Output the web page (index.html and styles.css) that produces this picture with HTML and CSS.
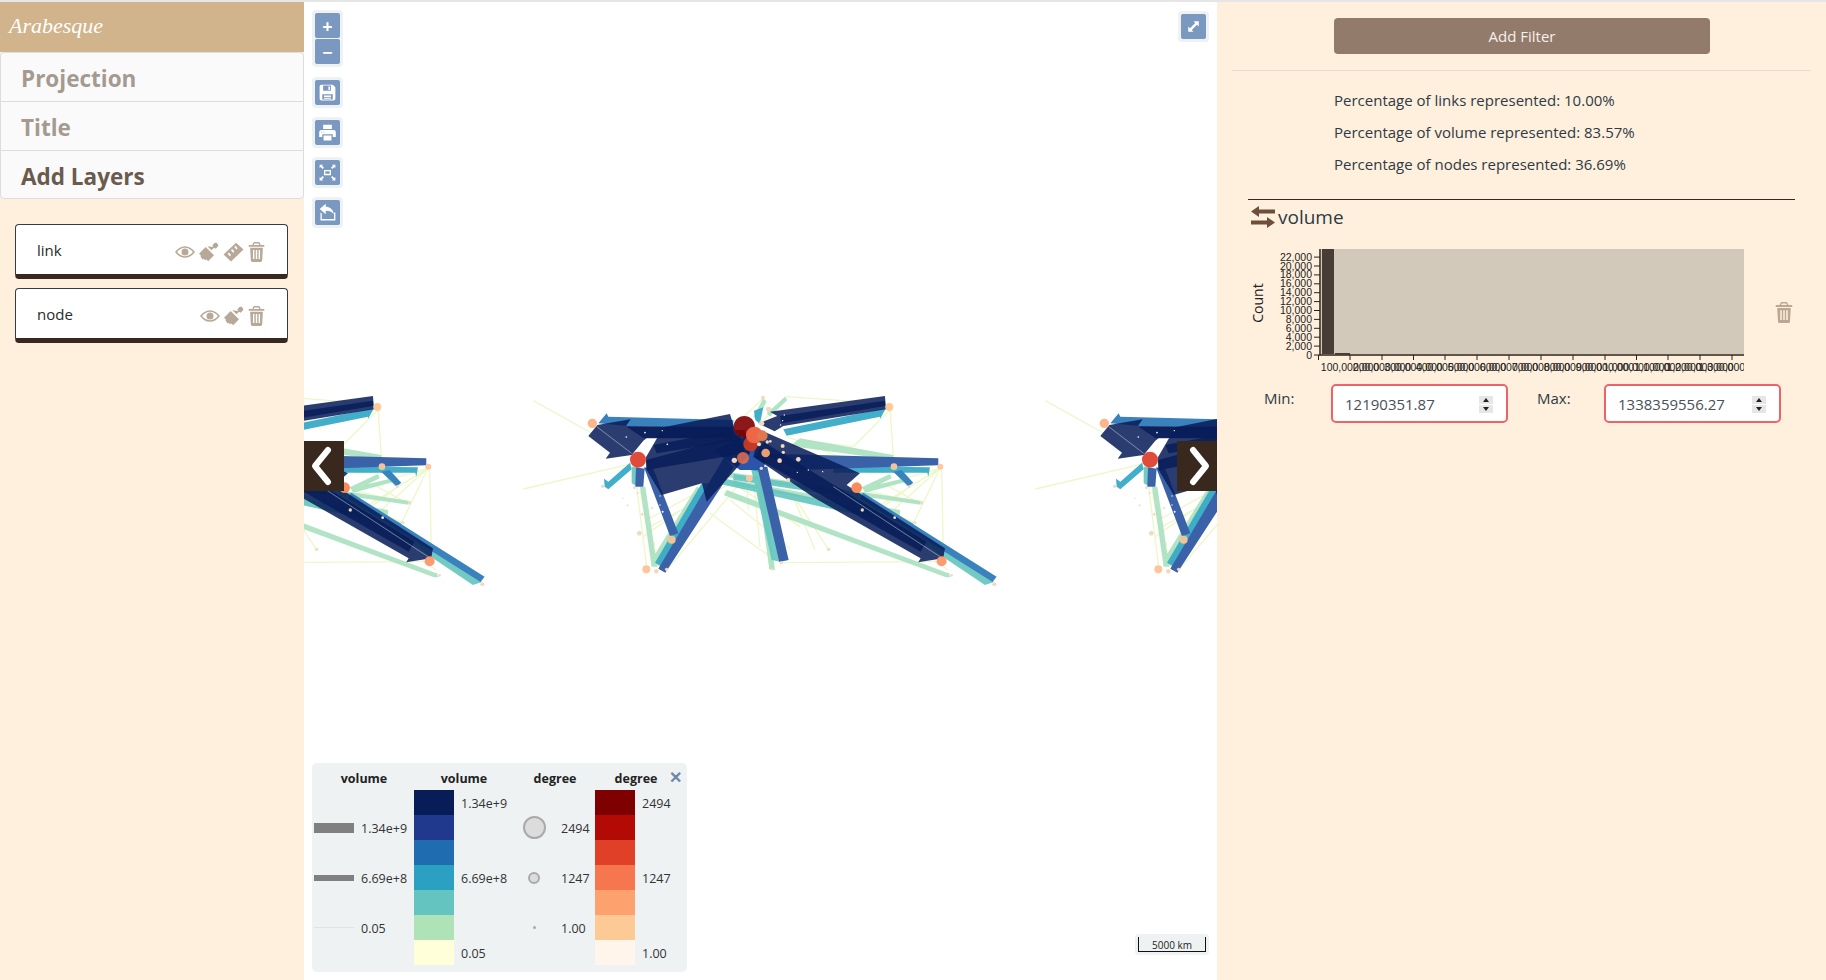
FILE: index.html
```html
<!DOCTYPE html>
<html lang="en">
<head>
    <meta charset="UTF-8" />
    <title>Arabesque</title>
    <link rel="stylesheet" href="styles.css">
</head>
<body>

<!-- Left panel -->
<div class="left-panel">
    <div class="logo">Arabesque</div>
    <div class="tabs">
        <div class="tab">Projection</div>
        <div class="tab">Title</div>
        <div class="tab tab-active">Add Layers</div>
    </div>
    <div class="layers">
        <div class="layer-card">
            <span class="layer-name">link</span>
            <span class="layer-icons">
                <svg class="icon icon-eye" viewBox="0 0 24 16"><path fill-rule="evenodd" d="M12 1C7 1 3 4 0 8c3 4 7 7 12 7s9-3 12-7c-3-4-7-7-12-7zM12 3c3.800 0 7 2 9.500 5-2.500 3-5.700 5-9.500 5S5 11 2.500 8C5 5 8.200 3 12 3z"/><circle cx="12" cy="8" r="4.200"/></svg>
                <svg class="icon icon-brush" viewBox="0 0 24 24"><path d="M0 14l8-8 10 10-7 7-2-2-2 1-1-2-2 1-1-2-1-1 0-2z"/><path d="M10 5l5 5 3-3 2 1 3-3V3l-2-2h-2l-3 3 1 2z"/></svg>
                <svg class="icon icon-ruler" viewBox="0 0 24 24"><path d="M0 15L15 1l9 8L9 23.500zM14.500 4.500L13 6l2.500 3L17 7.500zM10.500 8.500L9 10l2.500 3 1.500-1.500zM6.500 12.500L5 14l2.500 3L9 15.500z"/></svg>
                <svg class="icon icon-trash" viewBox="0 0 24 28"><path fill-rule="evenodd" d="M8 0h8l2 4h5v2.500H1V4h5zM9 2L8 4h8l-1-2zM3 8h18l-1 18a2 2 0 0 1-2 2H6a2 2 0 0 1-2-2zM7 11v13h2V11zM11 11v13h2V11zM15 11v13h2V11z"/></svg>
            </span>
        </div>
        <div class="layer-card">
            <span class="layer-name">node</span>
            <span class="layer-icons">
                <svg class="icon icon-eye" viewBox="0 0 24 16"><path fill-rule="evenodd" d="M12 1C7 1 3 4 0 8c3 4 7 7 12 7s9-3 12-7c-3-4-7-7-12-7zM12 3c3.800 0 7 2 9.500 5-2.500 3-5.700 5-9.500 5S5 11 2.500 8C5 5 8.200 3 12 3z"/><circle cx="12" cy="8" r="4.200"/></svg>
                <svg class="icon icon-brush" viewBox="0 0 24 24"><path d="M0 14l8-8 10 10-7 7-2-2-2 1-1-2-2 1-1-2-1-1 0-2z"/><path d="M10 5l5 5 3-3 2 1 3-3V3l-2-2h-2l-3 3 1 2z"/></svg>
                <svg class="icon icon-trash" viewBox="0 0 24 28"><path fill-rule="evenodd" d="M8 0h8l2 4h5v2.500H1V4h5zM9 2L8 4h8l-1-2zM3 8h18l-1 18a2 2 0 0 1-2 2H6a2 2 0 0 1-2-2zM7 11v13h2V11zM11 11v13h2V11zM15 11v13h2V11z"/></svg>
            </span>
        </div>
    </div>
</div>

<!-- Map -->
<div class="map">
    <svg class="map-svg" viewBox="0 0 913 978">
        <defs>
            <g id="world" transform="translate(196 368) scale(.3333)">
                <!-- thin links -->
                <g fill="none" stroke="#edf8c8" stroke-width="4">
                    <path d="M100 92L285 195M70 357L400 280M1170 110L1182 290M1325 290L1330 540M845 578L1325 575M860 80L1150 100M790 85L700 170M860 80L790 150M1060 230L1170 120"/>
                    <path d="M410 350L440 590M420 360L465 590M430 500L700 310M450 470L730 320M470 560L640 340M500 600L720 340M440 450L660 330M470 590L600 360M630 430L810 560M740 330L745 420M790 320L815 600M850 330L985 538M880 380L945 540M690 390L870 535M760 320L780 530M700 340L900 470"/>
                    <path d="M1320 295L1100 430M1320 295L1180 420M1320 295L1240 460M1320 295L1130 350M1230 350L1150 410M1090 360L1265 400M1060 400L1345 600M1180 440L1330 560M1100 310L1320 300M1150 340L1260 400M1050 375L1250 460M900 210L1060 230M860 200L1100 290"/>
                </g>
                <!-- green and teal links -->
                <path fill="#a9e0bf" fill-opacity=".9" d="M680 360L1345 610L1352 622L1338 622L672 376zM680 305L1262 392L1262 404L680 322zM900 205L1180 255L1180 270L870 228zM790 85L760 140L770 148L800 95zM855 80L800 130L810 140L862 90zM420 350L436 350L472 590L455 590zM590 350L625 370L480 590L455 570zM560 400L590 410L470 570L460 560zM770 320L790 320L825 600L808 598zM1085 352L1170 312L1175 325L1095 365zM1090 355L1225 322L1225 334L1095 368zM700 330L1200 420L1200 436L700 345zM1280 600L1350 610L1340 622z"/>
                <path fill="#64c4bf" fill-opacity=".9" d="M700 312L1090 370L1090 388L700 330zM670 325L1200 440L1240 460L1240 472L660 342zM1085 385L1482 636L1455 645L1062 382zM752 290L778 290L840 575L815 570zM395 290L408 290L410 348L395 340zM1180 305L1205 305L1238 342L1222 348z"/>
                <path fill="#39aac6" fill-opacity=".95" d="M605 340L645 340L490 592L465 578zM390 278L395 298L325 358L314 350L312 326L325 335zM850 178L1140 118L1158 115L1140 147L1140 140L860 197zM762 122L790 112L780 162L766 150zM1000 288L1290 292L1285 320L1282 308L1000 308zM740 270L775 270L778 305L750 300z"/>
                <!-- blue links -->
                <path fill="#3a82bd" d="M295 160L320 130L325 140L700 150L700 172L380 168zM1090 368L1490 620L1478 636L1080 385zM1180 305L1205 300L1240 338L1226 348z"/>
                <path fill="#3b62a8" d="M672 262L702 292L496 608L475 596zM772 290L802 290L866 570L838 576zM432 292L460 296L535 490L510 498zM408 292L434 296L430 350L406 350zM780 250L1315 265L1315 286L900 300z"/>
                <path fill="#2a55a8" d="M640 240L760 190L800 260L790 300L720 300z"/>
                <!-- heavy links -->
                <g fill="#081d58" fill-opacity=".86">
                    <path d="M1155 78L1158 118L850 168L824 184L775 160L832 138L810 125z"/>
                    <path d="M292 165L392 148L378 168L700 170L700 205L440 205L430 212L395 255L317 266L330 248L265 198z"/>
                    <path d="M438 262L490 172L690 132L705 180L735 180L750 250L620 395L606 340L485 375L440 300z"/>
                    <path d="M780 180L1080 310L1040 345L1335 535L1330 565L1255 577L1262 565L940 382L760 260z"/>
                    <path d="M438 270L720 195L735 250L440 300z"/>
                    <path d="M460 225L700 180L720 210L470 250z"/>
                    <path d="M840 138L1155 92L1156 108L845 160z"/>
                    <path d="M790 215L1280 515L1262 545L765 262z"/>
                    <path d="M380 170L700 172L700 200L430 204z"/>
                </g>
                <path stroke="#c8e4e0" stroke-width="1.500" fill="none" d="M290 170L395 250M1000 350L1320 560"/>
                <!-- nodes -->
                <circle cx="733" cy="170" r="32" fill="#7f0000" fill-opacity=".9"/>
                <circle cx="752" cy="222" r="22" fill="#c8391f" fill-opacity=".95"/>
                <circle cx="763" cy="195" r="25" fill="#ef6548"/>
                <circle cx="787" cy="197" r="16" fill="#e0784f"/>
                <circle cx="729" cy="264" r="18" fill="#e8704e" fill-opacity=".85"/>
                <circle cx="797" cy="249" r="13" fill="#e8a070"/>
                <circle cx="414" cy="269" r="24" fill="#e04b3a"/>
                <circle cx="277" cy="160" r="14" fill="#fdb58a"/>
                <circle cx="1070" cy="353" r="16" fill="#f88b5a"/>
                <circle cx="1325" cy="574" r="15" fill="#fc9a70"/>
                <circle cx="1168" cy="111" r="12" fill="#fdca98"/>
                <circle cx="1182" cy="290" r="10" fill="#f0c49c"/>
                <circle cx="1321" cy="290" r="9" fill="#fdc9a0"/>
                <circle cx="515" cy="509" r="12" fill="#efc496"/>
                <circle cx="439" cy="598" r="12" fill="#fdc59a"/>
                <circle cx="748" cy="325" r="10" fill="#fac8a0"/>
                <g fill="#f3d9bd">
                    <circle cx="703" cy="271" r="8"/><circle cx="785" cy="160" r="8"/><circle cx="806" cy="118" r="8"/><circle cx="789" cy="83" r="6"/>
                    <circle cx="839" cy="272" r="7"/><circle cx="895" cy="268" r="7"/><circle cx="848" cy="228" r="6"/><circle cx="850" cy="247" r="5"/>
                    <circle cx="777" cy="223" r="6"/><circle cx="802" cy="216" r="5"/><circle cx="811" cy="214" r="4"/><circle cx="784" cy="295" r="5"/>
                    <circle cx="469" cy="604" r="7"/><circle cx="418" cy="490" r="7"/><circle cx="986" cy="538" r="5"/><circle cx="844" cy="578" r="5"/>
                    <circle cx="865" cy="330" r="6"/><circle cx="1087" cy="420" r="5"/><circle cx="1184" cy="443" r="4"/><circle cx="1265" cy="398" r="5"/>
                    <circle cx="1244" cy="458" r="4"/><circle cx="1355" cy="616" r="4"/><circle cx="1483" cy="643" r="6"/><circle cx="817" cy="598" r="4"/>
                    <circle cx="308" cy="349" r="5"/><circle cx="403" cy="353" r="4"/><circle cx="413" cy="370" r="3"/><circle cx="383" cy="406" r="3"/>
                    <circle cx="427" cy="433" r="4"/><circle cx="456" cy="414" r="3"/><circle cx="369" cy="385" r="2"/><circle cx="462" cy="522" r="3"/>
                    <circle cx="500" cy="598" r="5"/><circle cx="1228" cy="350" r="4"/>
                </g>
                <g fill="#fff">
                    <circle cx="435" cy="188" r="2.500"/><circle cx="487" cy="182" r="2"/><circle cx="379" cy="201" r="2.500"/><circle cx="502" cy="223" r="2.500"/>
                    <circle cx="853" cy="135" r="2"/><circle cx="848" cy="152" r="2"/><circle cx="842" cy="165" r="2"/><circle cx="823" cy="188" r="2"/>
                    <circle cx="892" cy="307" r="2"/><circle cx="925" cy="300" r="2"/><circle cx="968" cy="305" r="2"/><circle cx="1185" cy="443" r="2"/>
                    <circle cx="480" cy="378" r="2"/><circle cx="480" cy="405" r="2"/><circle cx="488" cy="425" r="3"/>
                </g>
            </g>
        </defs>
        <use href="#world" transform="translate(-512 0)"/>
        <use href="#world"/>
        <use href="#world" transform="translate(512 0)"/>
    </svg>

    <!-- Map tools -->
    <div class="tools">
        <div class="tool-group tool-zoom">
            <div class="tool-btn">+</div>
            <div class="tool-btn">&minus;</div>
        </div>
        <div class="tool-group">
            <div class="tool-btn"><svg viewBox="0 0 24 24"><path fill-rule="evenodd" d="M5 3h13l3 3v13a2 2 0 0 1-2 2H5a2 2 0 0 1-2-2V5a2 2 0 0 1 2-2zM7 4v6h9V4zM13 5h2v4h-2zM6 14v6h12v-6zM8 15.500h8V17H8zM8 18h8v1H8z"/></svg></div>
        </div>
        <div class="tool-group">
            <div class="tool-btn"><svg viewBox="0 0 24 24"><path fill-rule="evenodd" d="M7 3h10v5H7zM5 9h14a2.500 2.500 0 0 1 2.500 2.500V17H18v-3H6v3H2.500v-5.500A2.500 2.500 0 0 1 5 9zM5 11v1h1v-1zM7.500 11v1h1v-1zM7.500 15.500h9V21h-9z"/></svg></div>
        </div>
        <div class="tool-group">
            <div class="tool-btn"><svg viewBox="0 0 24 24"><path fill-rule="evenodd" d="M8 9h8v6H8zM9.500 10.500v3h5v-3zM3 3h4L5.800 4.200 8 6.500 6.500 8 4.200 5.800 3 7zM21 3v4l-1.200-1.200L17.500 8 16 6.500l2.200-2.300L17 3zM3 21v-4l1.200 1.200L6.500 16 8 17.500l-2.200 2.300L7 21zM21 21h-4l1.200-1.200L16 17.500l1.500-1.500 2.300 2.200L21 17z"/></svg></div>
        </div>
        <div class="tool-group">
            <div class="tool-btn"><svg viewBox="0 0 24 24"><path d="M10 2L3 8l7 6v-4c4 0 7 1 9 4 0-5-3-8-9-9z"/><path d="M4 12v9h17v-9h-1.500v7.500h-14V13z"/></svg></div>
        </div>
    </div>

    <div class="tool-group tool-expand">
        <div class="tool-btn"><svg viewBox="0 0 24 24"><path d="M18 6v6l-2-2-6 6 2 2H6v-6l2 2 6-6-2-2z"/></svg></div>
    </div>

    <!-- Carousel arrows -->
    <div class="arrow arrow-left"><svg viewBox="0 0 40 50"><path d="M24 9L11 25l13 16"/></svg></div>
    <div class="arrow arrow-right"><svg viewBox="0 0 40 50"><path d="M16 9l13 16-13 16"/></svg></div>

    <!-- Legend -->
    <div class="legend">
        <span class="legend-close">&#10005;</span>
        <div class="legend-col col-lines">
            <div class="legend-title">volume</div>
            <div class="legend-row"></div>
            <div class="legend-row"><span class="line-sample line-big"></span><span class="legend-label">1.34e+9</span></div>
            <div class="legend-row"></div>
            <div class="legend-row"><span class="line-sample line-mid"></span><span class="legend-label">6.69e+8</span></div>
            <div class="legend-row"></div>
            <div class="legend-row"><span class="line-sample line-small"></span><span class="legend-label">0.05</span></div>
        </div>
        <div class="legend-col col-ramp-blue">
            <div class="legend-title">volume</div>
            <div class="legend-row"><span class="swatch blue-1"></span><span class="legend-label">1.34e+9</span></div>
            <div class="legend-row"><span class="swatch blue-2"></span></div>
            <div class="legend-row"><span class="swatch blue-3"></span></div>
            <div class="legend-row"><span class="swatch blue-4"></span><span class="legend-label">6.69e+8</span></div>
            <div class="legend-row"><span class="swatch blue-5"></span></div>
            <div class="legend-row"><span class="swatch blue-6"></span></div>
            <div class="legend-row"><span class="swatch blue-7"></span><span class="legend-label">0.05</span></div>
        </div>
        <div class="legend-col col-circles">
            <div class="legend-title">degree</div>
            <div class="legend-row"></div>
            <div class="legend-row"><span class="circle-slot"><span class="circle circle-big"></span></span><span class="legend-label">2494</span></div>
            <div class="legend-row"></div>
            <div class="legend-row"><span class="circle-slot"><span class="circle circle-mid"></span></span><span class="legend-label">1247</span></div>
            <div class="legend-row"></div>
            <div class="legend-row"><span class="circle-slot"><span class="circle circle-small"></span></span><span class="legend-label">1.00</span></div>
        </div>
        <div class="legend-col col-ramp-red">
            <div class="legend-title">degree</div>
            <div class="legend-row"><span class="swatch red-1"></span><span class="legend-label">2494</span></div>
            <div class="legend-row"><span class="swatch red-2"></span></div>
            <div class="legend-row"><span class="swatch red-3"></span></div>
            <div class="legend-row"><span class="swatch red-4"></span><span class="legend-label">1247</span></div>
            <div class="legend-row"><span class="swatch red-5"></span></div>
            <div class="legend-row"><span class="swatch red-6"></span></div>
            <div class="legend-row"><span class="swatch red-7"></span><span class="legend-label">1.00</span></div>
        </div>
    </div>

    <!-- Scale bar -->
    <div class="scale-bar"><span class="scale-inner">5000 km</span></div>
</div>

<!-- Right panel -->
<div class="right-panel">
    <button class="add-filter">Add Filter</button>
    <hr class="hr-light">
    <div class="stats">
        <p>Percentage of links represented: 10.00%</p>
        <p>Percentage of volume represented: 83.57%</p>
        <p>Percentage of nodes represented: 36.69%</p>
    </div>
    <div class="filter">
        <div class="filter-title">
            <svg class="exchange" viewBox="0 0 24 22"><path d="M8 0v3.500h16v4H8V11L0 5.500zM16 11l8 5.500L16 22v-3.500H0v-4h16z"/></svg>
            <span>volume</span>
        </div>
        <div class="chart-row">
            <svg class="chart" viewBox="0 0 496 140">
                <rect x="73" y="9" width="423" height="105" fill="#d3c9ba"/>
                <rect x="74" y="9" width="12" height="105" fill="#483c36"/>
                <rect x="87" y="113" width="15" height="1.500" fill="#483c36"/>
                <path d="M72 9V115H496" fill="none" stroke="#2e2118" stroke-width="1.500"/>
                <path stroke="#2e2118" d="M70.500 115v5M102 115v5M134 115v5M165.500 115v5M197 115v5M229 115v5M261 115v5M293 115v5M325 115v5M357 115v5M388.500 115v5M420 115v5M452 115v5M484 115v5"/>
                <path stroke="#2e2118" d="M66 115h6M66 106.100h6M66 97.200h6M66 88.300h6M66 79.400h6M66 70.500h6M66 61.600h6M66 52.700h6M66 43.800h6M66 34.900h6M66 26h6M66 17.100h6"/>
                <g class="y-labels">
                    <text x="64" y="118.500">0</text><text x="64" y="109.600">2,000</text><text x="64" y="100.700">4,000</text><text x="64" y="91.800">6,000</text>
                    <text x="64" y="82.900">8,000</text><text x="64" y="74">10,000</text><text x="64" y="65.100">12,000</text><text x="64" y="56.200">14,000</text>
                    <text x="64" y="47.300">16,000</text><text x="64" y="38.400">18,000</text><text x="64" y="29.500">20,000</text><text x="64" y="20.600">22,000</text>
                </g>
                <g class="x-labels">
                    <text x="102" y="131">100,000,000</text><text x="134" y="131">200,000,000</text><text x="165.500" y="131">300,000,000</text><text x="197" y="131">400,000,000</text>
                    <text x="229" y="131">500,000,000</text><text x="261" y="131">600,000,000</text><text x="293" y="131">700,000,000</text><text x="325" y="131">800,000,000</text>
                    <text x="357" y="131">900,000,000</text><text x="388.500" y="131">1,000,000,000</text><text x="420" y="131">1,100,000,000</text>
                    <text x="452" y="131">1,200,000,000</text><text x="484" y="131">1,300,000,000</text>
                </g>
                <text class="count-label" transform="translate(15 63) rotate(-90)">Count</text>
            </svg>
            <svg class="filter-trash" viewBox="0 0 24 28"><path fill-rule="evenodd" d="M8 0h8l2 4h5v2.500H1V4h5zM9 2L8 4h8l-1-2zM3 8h18l-1 18a2 2 0 0 1-2 2H6a2 2 0 0 1-2-2zM7 11v13h2V11zM11 11v13h2V11zM15 11v13h2V11z"/></svg>
        </div>
        <div class="range-row">
            <label class="range-label">Min:</label>
            <span class="range-field">
                <input class="range-input" type="number" value="12190351.87" step="any">
                <span class="spin"><span class="spin-up"></span><span class="spin-down"></span></span>
            </span>
            <label class="range-label label-max">Max:</label>
            <span class="range-field">
                <input class="range-input" type="number" value="1338359556.27" step="any">
                <span class="spin"><span class="spin-up"></span><span class="spin-down"></span></span>
            </span>
        </div>
    </div>
</div>

</body>
</html>
```
FILE: styles.css
```css
/* page */
html, body {
    height: 100%;
}
body {
    margin: 0;
    box-sizing: border-box;
    height: 980px;
    border-top: 2px solid #e6e6e6;
    display: flex;
    overflow: hidden;
    font-family: "Open Sans", "Noto Sans", sans-serif;
    color: #2e3a44;
    background-color: #fff;
}

/* left panel */
.left-panel {
    width: 304px;
    flex: none;
    background-color: #fff0de;
}
.logo {
    height: 50px;
    padding-left: 9px;
    background-color: #d1b38c;
    color: #fff;
    font-family: "Liberation Serif", serif;
    font-style: italic;
    font-size: 22px;
    line-height: 48px;
    box-sizing: border-box;
}
.tabs {
    border: 1px solid #ddd;
    border-radius: 4px;
    background-color: #fafafa;
}
.tab {
    height: 48px;
    padding-left: 20px;
    border-bottom: 1px solid #ddd;
    font-size: 22.500px;
    font-weight: 700;
    line-height: 51px;
    color: #a59a90;
}
.tab-active {
    height: 47px;
    border-bottom: none;
    color: #6b5a4e;
}
.layers {
    display: flex;
    flex-direction: column;
    gap: 9px;
    margin: 25px 16px 0 15px;
}
.layer-card {
    display: flex;
    align-items: center;
    justify-content: space-between;
    box-sizing: border-box;
    height: 55px;
    padding: 0 22px 0 21px;
    background-color: #fff;
    border: 1px solid #333c44;
    border-bottom: 5px solid #38281e;
    border-radius: 4px;
}
.layer-name {
    font-size: 15px;
    color: #2a2a2a;
}
.layer-icons {
    display: flex;
    align-items: center;
    gap: 4px;
    margin-top: 4px;
}
.icon {
    fill: #b8a898;
}
.icon-eye {
    width: 20px;
    height: 14px;
}
.icon-brush {
    width: 20px;
    height: 20px;
}
.icon-ruler {
    width: 21px;
    height: 20px;
}
.icon-trash {
    width: 17px;
    height: 20px;
}

/* map */
.map {
    position: relative;
    flex: 1;
    overflow: hidden;
}
.map-svg {
    position: absolute;
    left: 0;
    top: 0;
    width: 913px;
    height: 978px;
}
.tools {
    position: absolute;
    left: 8px;
    top: 8px;
    display: flex;
    flex-direction: column;
    gap: 9px;
}
.tool-group {
    display: flex;
    flex-direction: column;
    gap: 1px;
    padding: 3px;
    background-color: #eef2f3;
    border-radius: 4px;
}
.tool-zoom {
    margin-bottom: 1px;
}
.tool-btn {
    width: 25px;
    height: 25px;
    border-radius: 2px;
    background-color: #7a98c0;
    color: #fff;
    font-size: 18px;
    font-weight: 700;
    line-height: 26px;
    text-align: center;
}
.tool-btn svg {
    display: block;
    width: 21px;
    height: 21px;
    margin: 2px;
    fill: #fff;
}
.tool-expand {
    position: absolute;
    right: 8px;
    top: 9px;
}
.arrow {
    position: absolute;
    top: 439px;
    width: 40px;
    height: 50px;
    background-color: #38281e;
}
.arrow svg {
    display: block;
    width: 40px;
    height: 50px;
    fill: none;
    stroke: #fff;
    stroke-width: 6;
    stroke-linecap: round;
    stroke-linejoin: round;
}
.arrow-left {
    left: 0;
}
.arrow-right {
    right: 0;
}

/* legend */
.legend {
    position: absolute;
    left: 8px;
    bottom: 8px;
    display: flex;
    box-sizing: border-box;
    width: 375px;
    height: 209px;
    padding: 0 2px;
    background-color: #eef2f3;
    border-radius: 5px;
}
.legend-close {
    position: absolute;
    right: 5px;
    top: 3px;
    font-size: 16px;
    font-weight: 700;
    color: #7088a8;
}
.legend-col {
    flex: none;
}
.col-lines {
    width: 100px;
}
.col-ramp-blue {
    width: 94px;
}
.col-circles {
    width: 87px;
}
.col-ramp-red {
    width: 90px;
}
.legend-title {
    box-sizing: border-box;
    height: 27px;
    font-size: 12.500px;
    font-weight: 700;
    line-height: 31px;
    text-align: center;
    color: #222;
}
.col-ramp-blue .legend-title {
    padding-left: 6px;
}
.col-circles .legend-title {
    padding-left: 7px;
}
.col-ramp-red .legend-title {
    padding-right: 8px;
}
.legend-row {
    display: flex;
    align-items: center;
    height: 25px;
}
.legend-label {
    padding-top: 2px;
    font-size: 12.500px;
    color: #333;
    white-space: nowrap;
}
.line-sample {
    width: 40px;
    margin-right: 7px;
    background-color: #808080;
}
.line-big {
    height: 10px;
}
.line-mid {
    height: 6px;
}
.line-small {
    height: 1px;
    background-color: #dde2e3;
}
.swatch {
    width: 40px;
    height: 25px;
    margin-right: 7px;
}
.blue-1 { background-color: #081d58; }
.blue-2 { background-color: #20398f; }
.blue-3 { background-color: #206cb0; }
.blue-4 { background-color: #2ca0c2; }
.blue-5 { background-color: #64c4bf; }
.blue-6 { background-color: #b0e2b8; }
.blue-7 { background-color: #ffffd9; }
.red-1 { background-color: #7f0000; }
.red-2 { background-color: #b30a05; }
.red-3 { background-color: #e04028; }
.red-4 { background-color: #f6774f; }
.red-5 { background-color: #fda26f; }
.red-6 { background-color: #fdc995; }
.red-7 { background-color: #fff5eb; }
.circle-slot {
    display: flex;
    align-items: center;
    justify-content: center;
    width: 26px;
    margin: 0 14px 0 13px;
}
.circle {
    box-sizing: border-box;
    border-radius: 50%;
    border: 2px solid #aaa;
    background-color: #dcdcdc;
}
.circle-big {
    width: 23px;
    height: 23px;
}
.circle-mid {
    width: 12px;
    height: 12px;
}
.circle-small {
    width: 3px;
    height: 3px;
    border: none;
    background-color: #aaa;
}

/* scale */
.scale-bar {
    position: absolute;
    right: 8px;
    bottom: 25px;
    padding: 3px;
    background-color: #eef2f3;
    border-radius: 4px;
}
.scale-inner {
    display: block;
    width: 66px;
    height: 14px;
    border: 1px solid #111;
    border-top: none;
    font-size: 10px;
    line-height: 17px;
    text-align: center;
    color: #222;
}

/* right panel */
.right-panel {
    width: 609px;
    flex: none;
    background-color: #fff0de;
}
.add-filter {
    display: block;
    width: 376px;
    height: 36px;
    margin: 16px 0 0 117px;
    border: none;
    border-radius: 4px;
    background-color: #937b6c;
    color: #f5f0ea;
    font-family: inherit;
    font-size: 15px;
}
.hr-light {
    height: 1px;
    margin: 16px 15px 0;
    border: none;
    background-color: #e6dccf;
}
.stats {
    padding: 13px 0 0 117px;
}
.stats p {
    margin: 0;
    height: 32px;
    font-size: 15px;
    line-height: 32px;
}
.filter {
    margin-top: 19px;
}
.filter-title {
    display: flex;
    align-items: center;
    gap: 3px;
    margin: 0 31px;
    padding: 4px 0 0 3px;
    border-top: 1px solid #38281e;
    font-size: 19px;
    line-height: 26px;
}
.exchange {
    width: 24px;
    height: 22px;
    fill: #6d4f3a;
}
.chart-row {
    display: flex;
    margin: 10px 0 0 31px;
}
.chart {
    width: 496px;
    height: 140px;
}
.chart text {
    font-family: "Liberation Sans", sans-serif;
    font-size: 10.500px;
    fill: #222;
}
.y-labels text {
    text-anchor: end;
}
.x-labels text {
    text-anchor: middle;
}
.chart .count-label {
    font-family: "Open Sans", sans-serif;
    font-size: 14px;
    text-anchor: middle;
}
.filter-trash {
    width: 18px;
    height: 21px;
    margin: 62px 0 0 31px;
    fill: #bba792;
}
.range-row {
    display: flex;
    align-items: center;
    margin: 4px 0 0 47px;
}
.range-label {
    width: 67px;
    margin-bottom: 11px;
    font-size: 15px;
}
.label-max {
    margin-left: 29px;
}
.range-field {
    position: relative;
    display: block;
    width: 177px;
    height: 39px;
}
.range-input {
    box-sizing: border-box;
    width: 177px;
    height: 39px;
    padding: 0 12px;
    border: 2px solid #f0626a;
    border-radius: 5px;
    background-color: #fff;
    color: #495057;
    font-family: inherit;
    font-size: 15px;
    appearance: textfield;
}
.range-input::-webkit-inner-spin-button {
    display: none;
}
.spin {
    position: absolute;
    right: 15px;
    top: 12px;
    display: flex;
    flex-direction: column;
    gap: 1px;
    width: 14px;
}
.spin-up, .spin-down {
    position: relative;
    height: 8px;
    background-color: #e6e6e6;
}
.spin-up::after, .spin-down::after {
    content: "";
    position: absolute;
    left: 4px;
    border-left: 3px solid transparent;
    border-right: 3px solid transparent;
}
.spin-up::after {
    top: 2px;
    border-bottom: 4px solid #222;
}
.spin-down::after {
    top: 2px;
    border-top: 4px solid #222;
}
```
